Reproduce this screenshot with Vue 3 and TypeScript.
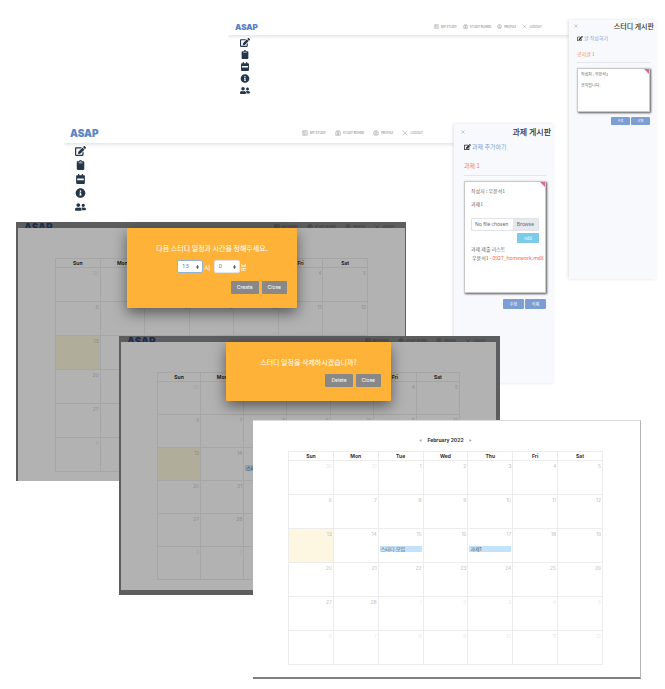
<script setup lang="ts">
import { ref } from 'vue'

interface Day {
  label: number
  current: boolean
  today: boolean
  event?: string
}

interface CalendarWindow {
  id: string
  dialog?: 'create' | 'delete'
}

const iconPaths = {
  edit: 'M402.6 83.2l90.2 90.2c3.8 3.8 3.8 10 0 13.8L274.4 405.6l-92.8 10.3c-12.4 1.4-22.9-9.1-21.5-21.5l10.3-92.8L388.8 83.2c3.8-3.8 10-3.8 13.8 0zm162-22.9l-48.8-48.8c-15.2-15.2-39.9-15.2-55.2 0l-35.4 35.4c-3.8 3.8-3.8 10 0 13.8l90.2 90.2c3.8 3.8 10 3.8 13.8 0l35.4-35.4c15.2-15.3 15.2-40 0-55.2zM384 346.2V448H64V128h229.8c3.2 0 6.2-1.3 8.5-3.5l40-40c7.6-7.6 2.2-20.5-8.5-20.5H48C21.5 64 0 85.5 0 112v352c0 26.5 21.5 48 48 48h352c26.5 0 48-21.5 48-48V306.2c0-10.7-12.9-16-20.5-8.5l-40 40c-2.2 2.3-3.5 5.3-3.5 8.5z',
  clipboard: 'M384 112v352c0 26.5-21.5 48-48 48H48c-26.5 0-48-21.5-48-48V112c0-26.5 21.5-48 48-48h80c0-35.3 28.7-64 64-64s64 28.7 64 64h80c26.5 0 48 21.5 48 48zM192 40c-13.3 0-24 10.7-24 24s10.7 24 24 24 24-10.7 24-24-10.7-24-24-24m96 114v-20a6 6 0 0 0-6-6H102a6 6 0 0 0-6 6v20a6 6 0 0 0 6 6h180a6 6 0 0 0 6-6z',
  calendar: 'M0 192h448v272c0 26.5-21.5 48-48 48H48c-26.5 0-48-21.5-48-48V192zM56 232v84h336v-84zM448 192v-80c0-26.5-21.5-48-48-48h-48V12c0-6.6-5.4-12-12-12h-40c-6.6 0-12 5.4-12 12v52H160V12c0-6.6-5.4-12-12-12h-40c-6.6 0-12 5.4-12 12v52H48C21.5 64 0 85.5 0 112v80z',
  info: 'M256 8C119 8 8 119.1 8 256c0 137 111 248 248 248s248-111 248-248C504 119.1 393 8 256 8zm0 110c23.2 0 42 18.8 42 42s-18.8 42-42 42-42-18.8-42-42 18.8-42 42-42zm56 254c0 6.6-5.4 12-12 12h-88c-6.6 0-12-5.4-12-12v-24c0-6.6 5.4-12 12-12h12v-64h-12c-6.6 0-12-5.4-12-12v-24c0-6.6 5.4-12 12-12h64c6.6 0 12 5.4 12 12v100h12c6.6 0 12 5.4 12 12v24z',
  users: 'M192 256c61.9 0 112-50.1 112-112S253.9 32 192 32 80 82.1 80 144s50.1 112 112 112zm76.8 32h-8.3c-20.8 10-43.9 16-68.5 16s-47.6-6-68.5-16h-8.3C51.6 288 0 339.6 0 403.2V432c0 26.5 21.5 48 48 48h288c26.5 0 48-21.5 48-48v-28.8c0-63.6-51.6-115.2-115.2-115.2zM480 256c53 0 96-43 96-96s-43-96-96-96-96 43-96 96 43 96 96 96zm48 32h-3.8c-13.9 4.8-28.6 8-44.2 8s-30.3-3.2-44.2-8H432c-20.4 0-39.2 5.9-55.7 15.4 24.4 26.3 39.7 61.2 39.7 99.8v38.4c0 2.2-.5 4.3-.6 6.4H592c26.5 0 48-21.5 48-48 0-61.9-50.1-112-112-112z',
}

const sideIcons = [
  { name: 'Write', box: '0 0 576 512', d: iconPaths.edit },
  { name: 'Tasks', box: '-64 0 512 512', d: iconPaths.clipboard },
  { name: 'Calendar', box: '-32 0 512 512', d: iconPaths.calendar },
  { name: 'Info', box: '0 0 512 512', d: iconPaths.info },
  { name: 'Members', box: '0 0 640 512', d: iconPaths.users },
]

const navItems = [
  { label: 'MY STUDY', d: 'M2 2h12v12H2zM6 2v12M8.5 5h3M8.5 8h3M8.5 11h3M3 5h2M3 8h2' },
  { label: 'STUDY BOARD', d: 'M2 5h12v9H2zM5 5V2h6v3M6 9a2 2 0 1 1 4 0a2 2 0 1 1-4 0M5 14c0-4 6-4 6 0' },
  { label: 'PROFILE', d: 'M1.5 8a6.5 6.5 0 1 1 13 0a6.5 6.5 0 1 1-13 0M5.5 6.5a2.5 2.5 0 1 1 5 0a2.5 2.5 0 1 1-5 0M4 13c0-4 8-4 8 0' },
  { label: 'LOGOUT', d: 'M2 2l12 12M14 2L2 14' },
]

const boards = ['study', 'task'] as const

const calendars: CalendarWindow[] = [
  { id: 'cal-create', dialog: 'create' },
  { id: 'cal-delete', dialog: 'delete' },
  { id: 'cal-plain' },
]

const weekdays = ['Sun', 'Mon', 'Tue', 'Wed', 'Thu', 'Fri', 'Sat']
const events: Record<number, string> = { 15: '스터디 모임', 17: '과제1' }

const firstCell = new Date(2022, 0, 30)
const weeks: Day[][] = Array.from({ length: 6 }, (_, w) =>
  Array.from({ length: 7 }, (_, d) => {
    const date = new Date(firstCell.getFullYear(), firstCell.getMonth(), firstCell.getDate() + w * 7 + d)
    const current = date.getMonth() === 1
    const label = date.getDate()
    return { label, current, today: current && label === 13, event: current ? events[label] : undefined }
  }),
)

const hour = ref(13)
const minute = ref(0)
</script>

<template>
  <main class="stage">
    <section v-for="board in boards" :key="board" class="window board" :class="board">
      <div class="main">
        <header class="topbar">
          <a href="#" class="logo">ASAP</a>
          <nav>
            <a v-for="item in navItems" :key="item.label" href="#">
              <svg viewBox="0 0 16 16"><path :d="item.d" /></svg>{{ item.label }}
            </a>
          </nav>
        </header>
        <aside class="rail">
          <button v-for="icon in sideIcons" :key="icon.name" type="button" :aria-label="icon.name">
            <svg :viewBox="icon.box"><path fill-rule="evenodd" :d="icon.d" /></svg>
          </button>
        </aside>
      </div>
      <div class="drawer">
        <div class="drawer-head">
          <button type="button" class="dismiss" aria-label="Close panel">
            <svg viewBox="0 0 10 10"><path d="M1 1l8 8M9 1L1 9" /></svg>
          </button>
          <h2>{{ board === 'study' ? '스터디 게시판' : '과제 게시판' }}</h2>
        </div>
        <a href="#" class="write">
          <svg viewBox="0 0 576 512"><path :d="iconPaths.edit" /></svg>
          {{ board === 'study' ? '글 작성하기' : '과제 추가하기' }}
        </a>
        <a href="#" class="post">{{ board === 'study' ? '공지글 1' : '과제 1' }}</a>
        <article class="card">
          <p>작성자 : 우윤석1</p>
          <p>{{ board === 'study' ? '공지입니다.' : '과제1' }}</p>
          <template v-if="board === 'task'">
            <label class="file">
              <input type="file" />
              <span class="file-name">No file chosen</span>
              <span class="file-browse">Browse</span>
            </label>
            <button type="button" class="add">Add</button>
            <p class="list-title">과제 제출 리스트</p>
            <p class="submission">우윤석1 - <a href="#">0927_homework.mdX</a></p>
          </template>
        </article>
        <div class="actions">
          <button type="button">수정</button>
          <button type="button">삭제</button>
        </div>
      </div>
    </section>

    <section v-for="cal in calendars" :key="cal.id" class="window calendar" :class="[cal.id, { dimmed: cal.dialog }]">
      <header v-if="cal.dialog" class="topbar">
        <a href="#" class="logo">ASAP</a>
        <nav>
          <a v-for="item in navItems" :key="item.label" href="#">
            <svg viewBox="0 0 16 16"><path :d="item.d" /></svg>{{ item.label }}
          </a>
        </nav>
      </header>
      <div class="sheet">
        <div class="month">
          <template v-if="!cal.dialog">
            <button type="button" aria-label="Previous month"><svg viewBox="0 0 6 6"><path d="M5 0v6L1 3z" /></svg></button>
            <strong>February 2022</strong>
            <button type="button" aria-label="Next month"><svg viewBox="0 0 6 6"><path d="M1 0v6l4-3z" /></svg></button>
          </template>
        </div>
        <table>
          <thead>
            <tr><th v-for="name in weekdays" :key="name" scope="col">{{ name }}</th></tr>
          </thead>
          <tbody>
            <tr v-for="(week, w) in weeks" :key="w">
              <td v-for="(day, d) in week" :key="d" :class="{ today: day.today, outside: !day.current }">
                <div class="num">{{ day.label }}</div>
                <div v-if="day.event" class="event">{{ day.event }}</div>
              </td>
            </tr>
          </tbody>
        </table>
      </div>
      <form v-if="cal.dialog" class="dialog" @submit.prevent>
        <template v-if="cal.dialog === 'create'">
          <p>다음 스터디 일정과 시간을 정해주세요.</p>
          <div class="time">
            <label>
              <span class="pick focused">
                <select v-model="hour"><option v-for="h in 24" :key="h" :value="h - 1">{{ h - 1 }}</option></select>
                <svg viewBox="0 0 4 6"><path d="M2 0l2 2.5H0zM2 6l2-2.5H0z" /></svg>
              </span>시
            </label>
            <label>
              <span class="pick">
                <select v-model="minute"><option v-for="m in 60" :key="m" :value="m - 1">{{ m - 1 }}</option></select>
                <svg viewBox="0 0 4 6"><path d="M2 0l2 2.5H0zM2 6l2-2.5H0z" /></svg>
              </span>분
            </label>
          </div>
        </template>
        <p v-else>스터디 일정을 삭제하시겠습니까?</p>
        <div class="dialog-actions">
          <button type="submit">{{ cal.dialog === 'create' ? 'Create' : 'Delete' }}</button>
          <button type="button">Close</button>
        </div>
      </form>
    </section>
  </main>
</template>

<style>
body {
  background: #fff;
}
</style>

<style scoped>
.stage {
  position: relative;
  min-height: 689px;
  overflow: hidden;
  font-family: Inter, "Noto Sans CJK KR", sans-serif;
  color: #666;
}
.stage * {
  box-sizing: border-box;
}
a {
  color: inherit;
  text-decoration: none;
}
button {
  margin: 0;
  padding: 0;
  border: 0;
  background: none;
  font-family: inherit;
  color: inherit;
}
p,
h2 {
  margin: 0;
}
svg {
  display: block;
  flex: none;
}

/* windows on the canvas */
.window {
  position: absolute;
}
.study {
  top: 20px;
  left: 228px;
  right: 9px;
}
.task {
  top: 124px;
  left: 64px;
  right: 111px;
}
.cal-create {
  top: 222px;
  left: 16px;
  right: 259px;
}
.cal-delete {
  top: 336px;
  left: 119px;
  right: 165px;
}
.cal-plain {
  top: 420px;
  left: 253px;
  right: 24px;
}

/* shared top bar */
.topbar {
  display: flex;
  align-items: center;
  justify-content: space-between;
}
.logo {
  font-size: 10px;
  line-height: 10px;
  font-weight: 900;
  color: #5b83c4;
}
nav {
  display: flex;
  gap: 9px;
}
nav a {
  display: flex;
  align-items: center;
  gap: 2px;
  font-size: 3px;
  line-height: 6px;
  color: #777;
  white-space: nowrap;
}
nav svg {
  width: 6px;
  height: 6px;
  fill: none;
  stroke: #888;
  stroke-width: 1.2;
}

/* board windows */
.board {
  display: flex;
  background: #fff;
}
.main {
  flex: 1;
}
.board .topbar {
  height: 19px;
  padding: 0 31px 2px 6px;
  box-shadow: 0 2px 3px rgba(0, 0, 0, 0.1);
  clip-path: inset(0 0 -6px 0);
}
.study .topbar {
  height: 15px;
  padding: 0 27px 2px 7px;
}
.study .logo {
  font-size: 8px;
}
.study nav {
  gap: 6px;
}
.study nav svg {
  width: 5px;
  height: 5px;
}
.rail {
  display: grid;
  gap: 4px;
  width: 32px;
  padding-top: 3px;
  justify-items: center;
}
.rail svg {
  width: 11px;
  height: 10px;
  fill: #24364a;
}
.study .rail {
  gap: 3px;
  width: 34px;
}
.study .rail svg {
  width: 10px;
  height: 9px;
}
.drawer {
  width: 100px;
  min-height: 259px;
  padding: 0 8px 0 10px;
  background: #f7f9fc;
  box-shadow: -1px 0 3px rgba(0, 0, 0, 0.12);
  font-family: "Noto Sans CJK KR", sans-serif;
  font-size: 5px;
}
.study .drawer {
  width: 87px;
  padding: 0 6px 0 8px;
  font-size: 4px;
}
.drawer-head {
  display: flex;
  align-items: center;
  justify-content: space-between;
  height: 15px;
  margin: 0 -5px 0 -3px;
}
.study .drawer-head {
  height: 11px;
  margin-right: -4px;
}
.dismiss svg {
  width: 4px;
  height: 4px;
  fill: none;
  stroke: #888;
}
h2 {
  font-size: 8px;
  line-height: 10px;
  font-weight: 500;
  color: #333;
}
.study h2 {
  font-size: 7px;
}
.write {
  display: flex;
  align-items: center;
  gap: 1px;
  height: 8px;
  margin-top: 4px;
  font-size: 6px;
  line-height: 8px;
  color: #7f9fd2;
}
.write svg {
  width: 7px;
  height: 6px;
  fill: #222;
}
.post {
  display: block;
  margin-top: 11px;
  padding-bottom: 5px;
  border-bottom: 1px solid #e3e6ea;
  font-size: 6px;
  line-height: 8px;
  color: #f5805c;
}
.study .write,
.study .post {
  font-size: 5px;
}
.study .write {
  margin-top: 3px;
}
.study .write svg {
  width: 6px;
  height: 5px;
}
.study .post {
  margin-top: 8px;
  padding-bottom: 4px;
}
.card {
  position: relative;
  min-height: 112px;
  margin-top: 5px;
  padding: 5px 6px;
  border: 1px solid #c8c8c8;
  background: #fff;
  box-shadow: 1px 1px 2px #555;
}
.study .card {
  min-height: 44px;
  padding: 2px 3px;
}
.card::after {
  content: "";
  position: absolute;
  top: 0;
  right: 0;
  border-top: 5px solid #dd6a94;
  border-left: 5px solid transparent;
}
.card p {
  line-height: 7px;
}
.card p + p {
  margin-top: 6px;
}
.study .card p + p {
  margin-top: 4px;
}
.file {
  display: flex;
  height: 13px;
  margin-top: 11px;
  border: 1px solid #dfe3e7;
  border-radius: 1px;
  font-family: "Noto Sans", sans-serif;
  line-height: 11px;
}
.file input {
  position: absolute;
  width: 1px;
  height: 1px;
  opacity: 0;
}
.file-name {
  flex: 1;
  padding-left: 3px;
  white-space: nowrap;
}
.file-browse {
  padding: 0 4px;
  background: #e6eaee;
}
.add {
  display: block;
  width: 22px;
  height: 10px;
  margin: 2px 0 0 auto;
  border-radius: 1px;
  background: #7ccbe9;
  font-size: 4px;
  line-height: 10px;
  color: #fff;
}
.card .list-title {
  margin-top: 2px;
}
.card .submission {
  margin: 2px 0 0 1px;
  white-space: nowrap;
}
.submission a {
  color: #f5663e;
}
.actions {
  display: flex;
  justify-content: flex-end;
  gap: 1px;
  margin-top: 6px;
}
.study .actions {
  margin-top: 5px;
}
.actions button {
  width: 21px;
  height: 10px;
  border-radius: 1px;
  background: #7c9ed2;
  font-size: 4px;
  line-height: 10px;
  color: #fff;
}
.study .actions button {
  width: 19px;
  height: 8px;
  font-size: 3px;
  line-height: 8px;
}

/* calendar windows */
.calendar {
  --line: #ececec;
  --row: 34px;
}
.sheet {
  background: #fff;
  padding: 0 37px 12px 35px;
}
.cal-plain .sheet {
  border-top: 1px solid #dcdcdc;
  border-right: 1px solid #b4b4b4;
  border-bottom: 2px solid #808080;
}
.month {
  display: flex;
  align-items: center;
  justify-content: center;
  gap: 5px;
  height: 30px;
  padding-top: 8px;
}
.month strong {
  font-size: 5px;
  line-height: 8px;
  font-weight: 700;
  color: #333;
}
.month svg {
  width: 3px;
  height: 3px;
  fill: #999;
}
table {
  width: 100%;
  table-layout: fixed;
  border-collapse: collapse;
}
th,
td {
  padding: 0;
  border: 1px solid var(--line);
}
th {
  height: 9px;
  font-size: 5px;
  line-height: 8px;
  font-weight: 700;
  color: #333;
}
td {
  height: var(--row);
  vertical-align: top;
  font-size: 5px;
  font-weight: 300;
  color: #aaa;
}
.num {
  padding: 1px 1px 0 0;
  line-height: 8px;
  text-align: right;
}
.outside {
  color: #e2e2e2;
}
.today {
  background: #fdf7e2;
}
.event {
  height: 6px;
  margin: 8px 1px 0;
  padding-left: 1px;
  background: #c3e3fc;
  font-size: 5px;
  line-height: 6px;
  font-weight: 400;
  color: #555;
  white-space: nowrap;
  overflow: hidden;
}
.dimmed {
  --line: #a6a6a6;
  background: #5c5d5e;
}
.dimmed .topbar {
  height: 6px;
  padding: 4px 10px 0 6px;
  overflow: hidden;
}
.dimmed .logo {
  color: #1d2d4c;
}
.dimmed nav a {
  color: #333;
}
.dimmed nav svg {
  stroke: #333;
}
.dimmed .sheet {
  background: #b2b2b2;
}
.dimmed th {
  color: #222;
}
.dimmed td {
  color: #808080;
}
.dimmed .outside {
  color: #9e9e9e;
}
.dimmed .today {
  background: #b1ad9b;
}
.dimmed .event {
  background: #88a3b5;
  color: #333;
}
.cal-create {
  padding: 0 1px 0 2px;
}
.cal-create .sheet {
  padding: 0 37px 9px 37px;
}
.cal-delete {
  --row: 33px;
  padding: 0 4px 5px 2px;
}
.cal-delete .sheet {
  padding: 0 36px 10px 36px;
}

/* dialogs over the calendars */
.dialog {
  position: absolute;
  top: 6px;
  left: 111px;
  right: 109px;
  padding: 15px 10px 14px;
  border-radius: 1px;
  background: #ffb238;
  box-shadow: 0 5px 14px rgba(0, 0, 0, 0.5);
  color: #fff;
  font-size: 7px;
  line-height: 10px;
  font-family: "Noto Sans CJK KR", sans-serif;
}
.cal-delete .dialog {
  left: 107px;
}
.dialog p {
  text-align: center;
  white-space: nowrap;
}
.time {
  display: flex;
  justify-content: center;
  gap: 3px;
  margin-top: 7px;
}
.time label {
  display: flex;
  align-items: center;
  gap: 1px;
}
.pick {
  position: relative;
  width: 26px;
  height: 13px;
}
.pick select {
  appearance: none;
  display: block;
  width: 100%;
  height: 100%;
  padding: 0 4px;
  border: 1px solid #e4e4e4;
  border-radius: 2px;
  background: #fff;
  font-family: "Noto Sans", sans-serif;
  font-size: 6px;
  line-height: 11px;
  color: #777;
}
.pick .focused,
.focused select {
  border-color: #8fb4da;
}
.pick svg {
  position: absolute;
  top: 5px;
  right: 4px;
  width: 3px;
  height: 4px;
  fill: #333;
}
.dialog-actions {
  display: flex;
  justify-content: flex-end;
  gap: 3px;
  margin-top: 8px;
}
.cal-delete .dialog-actions {
  margin-top: 7px;
}
.dialog-actions button {
  height: 13px;
  min-width: 25px;
  padding: 0 6px;
  border-radius: 1px;
  background: #888;
  font-family: Inter, sans-serif;
  font-size: 5px;
  line-height: 13px;
  color: #fff;
}
</style>
